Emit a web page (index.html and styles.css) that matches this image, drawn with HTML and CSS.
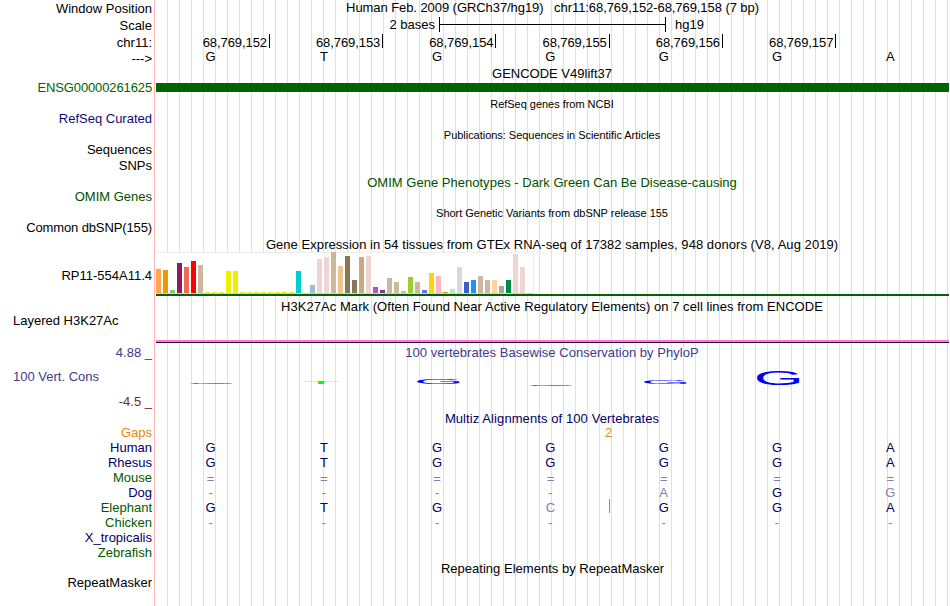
FILE: index.html
```html
<!DOCTYPE html>
<html lang="en">
<head>
    <meta charset="UTF-8">
    <title>Human chr11:68,769,152-68,769,158</title>
    <link rel="stylesheet" href="styles.css">
</head>
<body>
    <div class="browser">
        <!-- position, scale and ruler -->
        <div class="row position">
            <div class="label">Window Position</div>
            <div class="title t-pos">Human Feb. 2009 (GRCh37/hg19) &nbsp; chr11:68,769,152-68,769,158 (7 bp)</div>
        </div>
        <div class="row scale">
            <div class="label">Scale</div>
            <div class="scale-bar">
                <span class="scale-size">2 bases</span>
                <span class="scale-line"><i></i></span>
                <span>hg19</span>
            </div>
        </div>
        <div class="row ruler">
            <div class="label">chr11:</div>
            <div class="ticks">
                <span>68,769,152</span><span>68,769,153</span><span>68,769,154</span><span>68,769,155</span><span>68,769,156</span><span>68,769,157</span>
            </div>
        </div>
        <div class="row strand">
            <div class="label">---&gt;</div>
            <div class="bases"><span>G</span><span>T</span><span>G</span><span>G</span><span>G</span><span>G</span><span>A</span></div>
        </div>

        <!-- genes -->
        <div class="row">
            <div class="label"></div>
            <div class="title">GENCODE V49lift37</div>
        </div>
        <div class="row gene">
            <div class="label green tight">ENSG00000261625</div>
            <div class="gene-bar"></div>
        </div>
        <div class="row">
            <div class="label"></div>
            <div class="title small">RefSeq genes from NCBI</div>
        </div>
        <div class="row item">
            <div class="label blue">RefSeq Curated</div>
        </div>
        <div class="row">
            <div class="label"></div>
            <div class="title small">Publications: Sequences in Scientific Articles</div>
        </div>
        <div class="row item">
            <div class="label">Sequences</div>
        </div>
        <div class="row item">
            <div class="label">SNPs</div>
        </div>
        <div class="row">
            <div class="label"></div>
            <div class="title omim t-omim">OMIM Gene Phenotypes - Dark Green Can Be Disease-causing</div>
        </div>
        <div class="row item">
            <div class="label omim">OMIM Genes</div>
        </div>
        <div class="row">
            <div class="label"></div>
            <div class="title small">Short Genetic Variants from dbSNP release 155</div>
        </div>
        <div class="row item">
            <div class="label tight">Common dbSNP(155)</div>
        </div>

        <!-- expression in tissues -->
        <div class="row gtex-head">
            <div class="label"></div>
            <div class="title t-gtex">Gene Expression in 54 tissues from GTEx RNA-seq of 17382 samples, 948 donors (V8, Aug 2019)</div>
        </div>
        <div class="row gtex">
            <div class="label">RP11-554A11.4</div>
            <div class="gtex-track">
                <div class="gtex-chart">
                    <i style="height:24px;background:#ffa54f"></i>
                    <i style="height:23px;background:#ee9a00"></i>
                    <i style="height:3px;background:#8fbc8f"></i>
                    <i style="height:30px;background:#8b1c62"></i>
                    <i style="height:26px;background:#ee6a50"></i>
                    <i style="height:32px;background:#ff0000"></i>
                    <i style="height:28px;background:#cdb79e"></i>
                    <i style="height:1px;background:#eeee00"></i>
                    <i style="height:1px;background:#eeee00"></i>
                    <i style="height:1px;background:#eeee00"></i>
                    <i style="height:22px;background:#eeee00"></i>
                    <i style="height:22px;background:#eeee00"></i>
                    <i style="height:1px;background:#eeee00"></i>
                    <i style="height:1px;background:#eeee00"></i>
                    <i style="height:1px;background:#eeee00"></i>
                    <i style="height:1px;background:#eeee00"></i>
                    <i style="height:1px;background:#eeee00"></i>
                    <i style="height:1px;background:#eeee00"></i>
                    <i style="height:1px;background:#eeee00"></i>
                    <i style="height:1px;background:#eeee00"></i>
                    <i style="height:22px;background:#00cdcd"></i>
                    <i style="height:0px;background:#ee82ee"></i>
                    <i style="height:8px;background:#9ac0cd"></i>
                    <i style="height:34px;background:#eed5d2"></i>
                    <i style="height:36px;background:#eed5d2"></i>
                    <i style="height:41px;background:#cdb79e"></i>
                    <i style="height:27px;background:#eec591"></i>
                    <i style="height:37px;background:#8b7355"></i>
                    <i style="height:13px;background:#8b7355"></i>
                    <i style="height:36px;background:#cdaa7d"></i>
                    <i style="height:37px;background:#eed5d2"></i>
                    <i style="height:6px;background:#b452cd"></i>
                    <i style="height:3px;background:#7a378b"></i>
                    <i style="height:15px;background:#cdb79e"></i>
                    <i style="height:11px;background:#cdb79e"></i>
                    <i style="height:2px;background:#cdb79e"></i>
                    <i style="height:16px;background:#9acd32"></i>
                    <i style="height:11px;background:#cdb79e"></i>
                    <i style="height:3px;background:#7a67ee"></i>
                    <i style="height:20px;background:#ffd700"></i>
                    <i style="height:17px;background:#ffb6c1"></i>
                    <i style="height:1px;background:#cd9b1d"></i>
                    <i style="height:4px;background:#b4eeb4"></i>
                    <i style="height:26px;background:#d9d9d9"></i>
                    <i style="height:11px;background:#3a5fcd"></i>
                    <i style="height:13px;background:#1e90ff"></i>
                    <i style="height:17px;background:#cdb79e"></i>
                    <i style="height:13px;background:#cdb79e"></i>
                    <i style="height:13px;background:#ffd39b"></i>
                    <i style="height:7px;background:#a6a6a6"></i>
                    <i style="height:13px;background:#008b45"></i>
                    <i style="height:39px;background:#eed5d2"></i>
                    <i style="height:26px;background:#eed5d2"></i>
                    <i style="height:0px;background:#ff00ff"></i>
                </div>
            </div>
        </div>

        <!-- regulation -->
        <div class="row mark-head">
            <div class="label"></div>
            <div class="title t-mark">H3K27Ac Mark (Often Found Near Active Regulatory Elements) on 7 cell lines from ENCODE</div>
        </div>
        <div class="row mark">
            <div class="label left">Layered H3K27Ac</div>
            <div class="mark-line"></div>
        </div>

        <!-- conservation -->
        <div class="row cons-head">
            <div class="label slate">4.88 _</div>
            <div class="title slate t-cons">100 vertebrates Basewise Conservation by PhyloP</div>
        </div>
        <div class="row cons">
            <div class="label left slate">100 Vert. Cons</div>
            <svg class="logo" width="794" height="34" viewBox="155 360 794 34">
                <g fill="#0000ff" font-size="20">
                    <text transform="translate(187 383.9) scale(3.22 .11)">G</text>
                    <text transform="translate(413.8 383.8) scale(3.22 .4)">G</text>
                    <text transform="translate(526.6 385.8) scale(3.22 .05)">G</text>
                    <text transform="translate(640.8 383.8) scale(3.22 .26)">G</text>
                    <text transform="translate(753.8 384.6) scale(3.22 1.03)">G</text>
                </g>
                <text fill="#00ff00" font-size="20" transform="translate(301.4 383.8) scale(3.22 .14)">T</text>
            </svg>
        </div>
        <div class="row cons-foot">
            <div class="label maroon">-4.5 _</div>
        </div>

        <!-- alignments -->
        <div class="row">
            <div class="label"></div>
            <div class="title navy t-multiz">Multiz Alignments of 100 Vertebrates</div>
        </div>
        <div class="row align">
            <div class="label orange">Gaps</div>
            <div class="insert orange"><span>2</span></div>
        </div>
        <div class="row align">
            <div class="label navy">Human</div>
            <div class="bases navy"><span>G</span><span>T</span><span>G</span><span>G</span><span>G</span><span>G</span><span>A</span></div>
        </div>
        <div class="row align">
            <div class="label navy">Rhesus</div>
            <div class="bases navy"><span>G</span><span>T</span><span>G</span><span>G</span><span>G</span><span>G</span><span>A</span></div>
        </div>
        <div class="row align">
            <div class="label forest">Mouse</div>
            <div class="bases dim low"><span>=</span><span>=</span><span>=</span><span>=</span><span>=</span><span>=</span><span>=</span></div>
        </div>
        <div class="row align">
            <div class="label navy">Dog</div>
            <div class="bases dim"><span>-</span><span>-</span><span>-</span><span>-</span><span>A</span><span class="navy">G</span><span>G</span></div>
        </div>
        <div class="row align">
            <div class="label forest">Elephant</div>
            <div class="bases navy"><span>G</span><span>T</span><span>G</span><span class="dim gap-after">C<i></i></span><span>G</span><span>G</span><span>A</span></div>
        </div>
        <div class="row align">
            <div class="label forest">Chicken</div>
            <div class="bases dim"><span>-</span><span>-</span><span>-</span><span>-</span><span>-</span><span>-</span><span>-</span></div>
        </div>
        <div class="row align">
            <div class="label navy">X_tropicalis</div>
        </div>
        <div class="row align">
            <div class="label forest">Zebrafish</div>
        </div>

        <!-- repeats -->
        <div class="row">
            <div class="label"></div>
            <div class="title t-rep">Repeating Elements by RepeatMasker</div>
        </div>
        <div class="row align">
            <div class="label">RepeatMasker</div>
        </div>
    </div>
</body>
</html>
```
FILE: styles.css
```css
* {
    margin: 0;
    padding: 0;
    box-sizing: border-box;
}
body {
    background: #fff;
    font-family: "Liberation Sans", Arial, Helvetica, sans-serif;
    font-size: 13px;
    color: #000;
    overflow: hidden;
}
/* guide lines every 12px, red line between labels and tracks */
.browser {
    width: 949px;
    height: 606px;
    background:
        linear-gradient(#ffb4b4, #ffb4b4) 154px 0 / 1px 100% no-repeat,
        repeating-linear-gradient(to right, #dcdcff 0, #dcdcff 1px, transparent 1px, transparent 12px) 167px 0 no-repeat;
}
.row {
    display: grid;
    grid-template-columns: 155px 794px;
    height: 15px;
    line-height: 15px;
    white-space: nowrap;
}
.label {
    text-align: right;
    padding-right: 3px;
}
.label.left {
    text-align: left;
    padding-left: 13px;
}
.title {
    text-align: center;
}
.small {
    font-size: 11px;
    letter-spacing: -0.03px;
}
.tight {
    letter-spacing: -0.12px;
}
.t-pos {
    letter-spacing: -0.07px;
    padding-left: 1px;
}
.t-omim { letter-spacing: 0.02px; }
.t-gtex { letter-spacing: 0.055px; }
.t-mark { letter-spacing: 0.05px; }
.t-cons { letter-spacing: 0.03px; }
.t-multiz { letter-spacing: 0.09px; }
.t-rep {
    letter-spacing: 0.02px;
    padding-left: 1px;
}

.green { color: #006400; }
.forest { color: #005a00; }
.omim { color: #005000; }
.blue { color: #0c0c78; }
.navy { color: #000064; }
.slate { color: #3c3c8c; }
.maroon { color: #782828; }
.orange { color: #e68a00; }
.dim { color: #8080b2; }

.position {
    height: 17px;
}
.position .label {
    line-height: 18px;
}
.scale {
    height: 17px;
}
.scale .label {
    line-height: 18px;
}
.scale-bar {
    display: flex;
}
.scale-size {
    width: 284px;
    padding-right: 4px;
    text-align: right;
}
.scale-line {
    width: 227px;
    height: 15px;
    margin-right: 9px;
    border: solid #000;
    border-width: 0 1px;
    display: flex;
    align-items: center;
}
.scale-line i {
    flex: 1;
    height: 1px;
    background: #000;
}
.ruler {
    height: 16px;
}
.ruler .label {
    line-height: 18px;
}
.ticks {
    display: grid;
    grid-template-columns: repeat(6, 113.28px);
    margin-left: 1.7px;
}
.ticks span {
    height: 14px;
    line-height: 17px;
    padding-right: 2px;
    border-right: 1px solid #000;
    text-align: right;
    letter-spacing: -0.08px;
}
.strand {
    height: 16px;
}
.strand .label {
    line-height: 17px;
}
.strand .bases {
    line-height: 14px;
}
.bases {
    display: grid;
    grid-template-columns: repeat(7, 113.28px);
    margin-left: -1px;
    text-align: center;
}

.gene {
    height: 16px;
    line-height: 14px;
}
.gene-bar {
    height: 9px;
    margin: 2px 0 0 1px;
    background: #006400;
}
.item {
    height: 16px;
    line-height: 13px;
}

.gtex-head {
    height: 15px;
}
.gtex {
    height: 46px;
    line-height: 48px;
}
.gtex-track {
    height: 44px;
    margin-left: 1px;
    border-bottom: 2px solid #006400;
}
.gtex-chart {
    width: 378px;
    height: 42px;
    display: flex;
    align-items: flex-end;
    gap: 2px;
    background: #fff;
    border: solid #eee;
    border-width: 1px 1px 1px 0;
    border-bottom-color: #d2d2d2;
}
.gtex-chart i {
    width: 5px;
    flex: none;
}

.mark-head {
    height: 16px;
    line-height: 17px;
}
.mark {
    height: 31px;
    line-height: 13px;
}
.mark-line {
    height: 3px;
    margin: 26px 0 0 1px;
    background: #ff78d2;
    border-bottom: 1px solid #320046;
}
.cons {
    height: 34px;
    line-height: 34px;
}
.cons-foot {
    height: 17px;
}
.logo {
    display: block;
}

.align {
    line-height: 13px;
}
.insert {
    display: flex;
    padding-left: 450px;
}
.low {
    line-height: 16px;
}
.gap-after {
    display: flex;
    justify-content: space-between;
    padding-left: 52px;
    margin-right: -3px;
}
.gap-after i {
    width: 1px;
    height: 14px;
    margin-top: -2px;
    background: #d28200;
}
```
